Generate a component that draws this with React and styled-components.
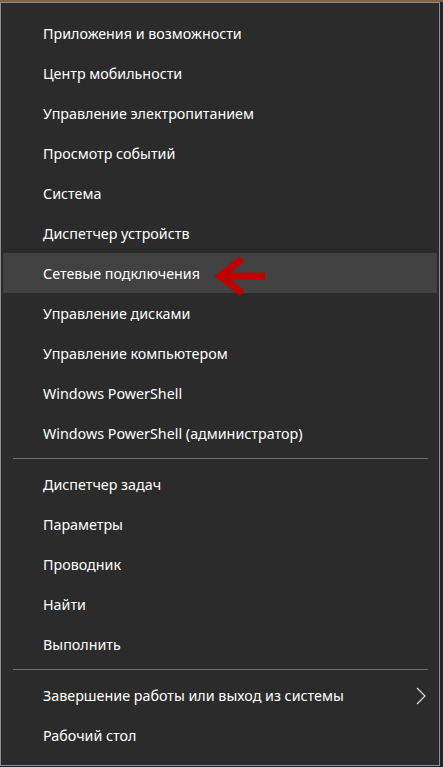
import React from 'react';
import styled, { createGlobalStyle } from 'styled-components';

const GlobalStyle = createGlobalStyle`
  html, body {
    margin: 0;
    padding: 0;
    background: #1b2533;
  }
  body {
    border-top: 2px solid #7d6246;
    font-family: "Segoe UI", "Noto Sans", "Open Sans", sans-serif;
  }
`;

const Menu = styled.nav`
  position: relative;
  width: 440px;
  height: 764px;
  box-sizing: border-box;
  background: #2b2b2b;
  border: 1px solid #8e8e8e;
  padding: 10px 1px;
  display: flex;
  flex-direction: column;
`;

const Item = styled.div`
  height: 40px;
  box-sizing: border-box;
  display: flex;
  align-items: center;
  justify-content: space-between;
  padding: 1px 10px 0 40px;
  margin: 0 1px;
  color: #ffffff;
  font-size: 14.3px;
  background: ${(p) => (p.$active ? '#414141' : 'transparent')};
`;

const Separator = styled.hr`
  border: none;
  height: 1px;
  margin: 5px 10px 5px 11px;
  background: #6f6f6f;
`;

const Chevron = () => (
  <svg width="12" height="18" viewBox="0 0 12 18">
    <polyline points="2,1 10,9 2,17" fill="none" stroke="#dcdcdc" strokeWidth="1.2" />
  </svg>
);

const Pointer = styled.svg`
  position: absolute;
  left: 208px;
  top: 250px;
  pointer-events: none;
`;

const top = [
  'Приложения и возможности',
  'Центр мобильности',
  'Управление электропитанием',
  'Просмотр событий',
  'Система',
  'Диспетчер устройств',
  'Сетевые подключения',
  'Управление дисками',
  'Управление компьютером',
  'Windows PowerShell',
  'Windows PowerShell (администратор)',
];

const middle = ['Диспетчер задач', 'Параметры', 'Проводник', 'Найти', 'Выполнить'];

export default function App() {
  return (
    <>
      <GlobalStyle />
      <Menu>
        {top.map((t) => (
          <Item key={t} $active={t === 'Сетевые подключения'}>
            {t}
          </Item>
        ))}
        <Separator />
        {middle.map((t) => (
          <Item key={t}>{t}</Item>
        ))}
        <Separator />
        <Item>
          Завершение работы или выход из системы
          <Chevron />
        </Item>
        <Item>Рабочий стол</Item>
        <Pointer width="60" height="44" viewBox="208 250 60 44">
          <polyline points="241,256 219,273 241,290" fill="none" stroke="#c00000" strokeWidth="7" strokeLinejoin="miter" />
          <line x1="222" y1="273" x2="264" y2="273" stroke="#c00000" strokeWidth="7" />
        </Pointer>
      </Menu>
    </>
  );
}
